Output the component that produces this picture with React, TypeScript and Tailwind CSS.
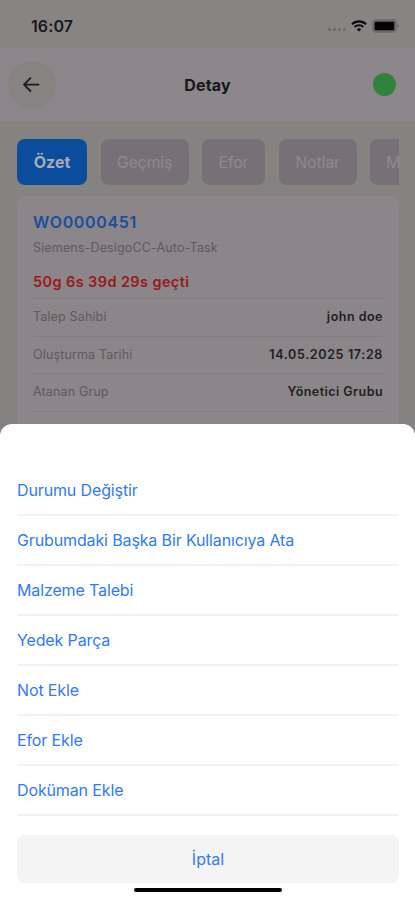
import clsx from "clsx";

type DetailRow = {
  label: string;
  value: string;
  valueClass: string;
};

const tabs = [
  { label: "Özet", className: "w-[70px] bg-[#0b4c9d] px-4 font-bold text-[#a9abb4]" },
  { label: "Geçmiş", className: "w-[88px] bg-[#777177] px-4 tracking-[-0.2px] text-[#8f898e]" },
  { label: "Efor", className: "w-[63px] bg-[#777177] px-4 tracking-[-0.2px] text-[#8f898e]" },
  { label: "Notlar", className: "w-[78px] bg-[#777177] px-4 tracking-[-0.2px] text-[#8f898e]" },
  { label: "Malzeme", className: "w-[98px] bg-[#777177] px-4 tracking-[-0.2px] text-[#8f898e]" },
];

const rows: DetailRow[] = [
  { label: "Talep Sahibi", value: "john doe", valueClass: "tracking-[0.5px]" },
  { label: "Oluşturma Tarihi", value: "14.05.2025 17:28", valueClass: "tracking-[0.65px]" },
  { label: "Atanan Grup", value: "Yönetici Grubu", valueClass: "tracking-[0.45px]" },
  { label: "Atanan Kişi", value: "john doe", valueClass: "tracking-[0.5px]" },
];

const actions = [
  "Durumu Değiştir",
  "Grubumdaki Başka Bir Kullanıcıya Ata",
  "Malzeme Talebi",
  "Yedek Parça",
  "Not Ekle",
  "Efor Ekle",
  "Doküman Ekle",
];

function StatusBar() {
  return (
    <div className="flex h-12 items-center justify-between bg-[#888483] pt-[3px] pr-[15px] pl-[31px]">
      <span className="text-base font-semibold tracking-[0.1px] text-[#181719]">16:07</span>
      <div className="flex items-center">
        <div className="mt-2 mr-[5px] flex gap-[2px]">
          {[0, 1, 2, 3].map((dot) => (
            <span key={dot} className="size-[3px] rounded-full bg-[#6d6969]" />
          ))}
        </div>
        <svg width="16" height="12" viewBox="0 0 16 12" fill="none" stroke="#0c0b0c">
          <path d="M1 4.2a10 10 0 0 1 14 0" strokeWidth="2.2" />
          <path d="M3.7 7a6.1 6.1 0 0 1 8.6 0" strokeWidth="2" />
          <path d="M8 11.6 5.8 9.4a3.1 3.1 0 0 1 4.4 0z" fill="#0c0b0c" stroke="none" />
        </svg>
        <svg className="ml-[5px]" width="28" height="14" viewBox="0 0 28 14">
          <rect x="0.8" y="0.8" width="23.4" height="12.4" rx="3.4" fill="#6d696a" stroke="#6d696a" strokeWidth="1.2" />
          <rect x="2.6" y="2.8" width="19.6" height="8.4" rx="1" fill="#020202" />
          <path d="M25.4 5v4c1-.4 1.6-1.1 1.6-2s-.6-1.6-1.6-2z" fill="#6d696a" />
        </svg>
      </div>
    </div>
  );
}

function Header() {
  return (
    <header className="grid h-[73px] grid-cols-[1fr_auto_1fr] items-center bg-[#8d868a] pr-[19px] pl-2">
      <button type="button" className="flex size-12 items-center justify-center rounded-full bg-[#878382]">
        <svg width="18" height="16" viewBox="0 0 18 16" fill="none" stroke="#1d1b1d" strokeWidth="1.8" strokeLinecap="round" strokeLinejoin="round">
          <path d="M15.6 7.6H1M7.4 1.2 1 7.6 7.4 14" />
        </svg>
      </button>
      <h1 className="mr-[-11px] text-base font-bold tracking-[0.2px] text-[#181719]">Detay</h1>
      <span className="size-[23px] justify-self-end rounded-full bg-[#32823f]" />
    </header>
  );
}

function DetailCard() {
  return (
    <section className="mt-[11px] h-60 rounded-lg bg-[#8c8589] px-4 pt-[14px]">
      <h2 className="text-base leading-6 font-semibold tracking-[0.65px] text-[#18509c]">WO0000451</h2>
      <p className="mt-1 text-[12.5px] leading-5 tracking-[0.15px] text-[#5f5a5e]">
        Siemens-DesigoCC-Auto-Task
      </p>
      <p className="mt-[14px] text-[14.5px] leading-5 font-semibold tracking-[0.4px] text-[#97191d]">
        50g 6s 39d 29s geçti
      </p>
      <dl className="mt-[6px]">
        {rows.map((row) => (
          <div
            key={row.label}
            className="flex h-[37.5px] items-center justify-between border-t border-[#827b80] pt-px text-[12.5px]"
          >
            <dt className="tracking-[0.15px] text-[#5f5a5e]">{row.label}</dt>
            <dd className={clsx("font-semibold text-[#201e20]", row.valueClass)}>{row.value}</dd>
          </div>
        ))}
      </dl>
    </section>
  );
}

function ActionSheet() {
  return (
    <div className="absolute inset-x-0 bottom-0 flex h-[476px] flex-col rounded-t-xl bg-white pt-[42px] pr-4 pl-[17px]">
      <ul>
        {actions.map((action) => (
          <li key={action} className="flex h-[50.05px] items-center border-b-2 border-[#f2f2f3]">
            <button type="button" className="text-base tracking-[-0.13px] text-[#2f7bf6]">
              {action}
            </button>
          </li>
        ))}
      </ul>
      <button type="button" className="mt-[19px] h-12 shrink-0 rounded-lg bg-[#f4f4f4] text-base text-[#2f7bf6]">
        İptal
      </button>
      <div className="mx-auto mt-[5px] h-1 w-[148px] shrink-0 rounded-full bg-black" />
    </div>
  );
}

export default function App() {
  return (
    <main className="relative h-[900px] w-[415px] overflow-hidden bg-[#868281] font-['Inter',sans-serif]">
      <StatusBar />
      <Header />
      <div className="pt-[17.5px] pr-4 pl-[17px]">
        <nav className="flex gap-[13.5px] overflow-hidden">
          {tabs.map((tab) => (
            <button
              key={tab.label}
              type="button"
              className={clsx("h-[46.5px] shrink-0 rounded-lg text-base", tab.className)}
            >
              {tab.label}
            </button>
          ))}
        </nav>
        <DetailCard />
      </div>
      <ActionSheet />
    </main>
  );
}
